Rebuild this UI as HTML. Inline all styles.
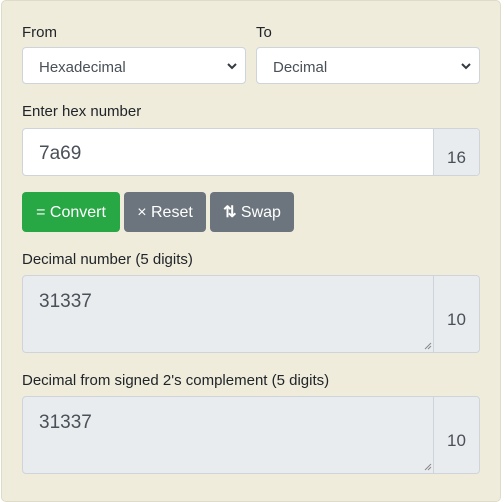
<!DOCTYPE html>
<html><head><style>
body{margin:0;width:504px;height:484px;overflow:hidden;background:#fff;font-family:"Liberation Sans",sans-serif;color:#212529}
.panel{position:absolute;left:1px;top:0;width:498px;height:500px;background:#efecdc;border:1px solid #dedbc8;border-radius:5px}
.abs{position:absolute}
.lbl{font-size:15px;color:#212529}
.sel{background:#fff;border:1px solid #ced4da;border-radius:4px;height:37px;box-sizing:border-box;font-size:15px;color:#495057;padding:11px 0 0 16px}
.sel svg{position:absolute;right:8px;top:14px}
.grp{border:1px solid #ced4da;border-radius:4px;box-sizing:border-box;overflow:hidden}
.add{position:absolute;right:0;top:0;bottom:0;width:45px;background:#e9ecef;border-left:1px solid #ced4da;font-size:17px;color:#495057;text-align:center}
.val{position:absolute;left:16px;font-size:19px;color:#495057}
.btn{position:absolute;top:192px;height:40px;border-radius:4px;color:#fff;font-size:16px;line-height:42px;text-align:center}
.grip{position:absolute;right:47px;bottom:2px}
</style></head><body>
<div class="panel"></div>
<div class="abs lbl" style="left:22px;top:24px">From</div>
<div class="abs lbl" style="left:256px;top:24px">To</div>
<div class="abs sel" style="left:22px;top:47px;width:224px">Hexadecimal<svg width="10" height="8" viewBox="0 0 10 8"><path d="M1 2l4 4 4-4" stroke="#343a40" stroke-width="2" fill="none"/></svg></div>
<div class="abs sel" style="left:256px;top:47px;width:224px">Decimal<svg width="10" height="8" viewBox="0 0 10 8"><path d="M1 2l4 4 4-4" stroke="#343a40" stroke-width="2" fill="none"/></svg></div>
<div class="abs lbl" style="left:22px;top:103px">Enter hex number</div>
<div class="abs grp" style="left:22px;top:128px;width:458px;height:48px;background:#fff">
<div class="val" style="top:14px">7a69</div>
<div class="add"><span style="position:relative;top:19px">16</span></div></div>
<div class="btn" style="left:22px;width:98px;background:#28a745">= Convert</div>
<div class="btn" style="left:124px;width:82px;background:#6c757d">× Reset</div>
<div class="btn" style="left:210px;width:84px;background:#6c757d"><b>⇅</b> Swap</div>
<div class="abs lbl" style="left:22px;top:251px">Decimal number (5 digits)</div>
<div class="abs grp" style="left:22px;top:275px;width:458px;height:78px;background:#e9ecef">
<div class="val" style="top:15px">31337</div>
<svg class="grip" width="8" height="8" viewBox="0 0 8 8"><path d="M1 7L7 1M4 7L7 4" stroke="#888" stroke-width="1"/></svg>
<div class="add"><span style="position:relative;top:34px">10</span></div></div>
<div class="abs lbl" style="left:22px;top:372px">Decimal from signed 2's complement (5 digits)</div>
<div class="abs grp" style="left:22px;top:396px;width:458px;height:78px;background:#e9ecef">
<div class="val" style="top:15px">31337</div>
<svg class="grip" width="8" height="8" viewBox="0 0 8 8"><path d="M1 7L7 1M4 7L7 4" stroke="#888" stroke-width="1"/></svg>
<div class="add"><span style="position:relative;top:34px">10</span></div></div>
</body></html>
